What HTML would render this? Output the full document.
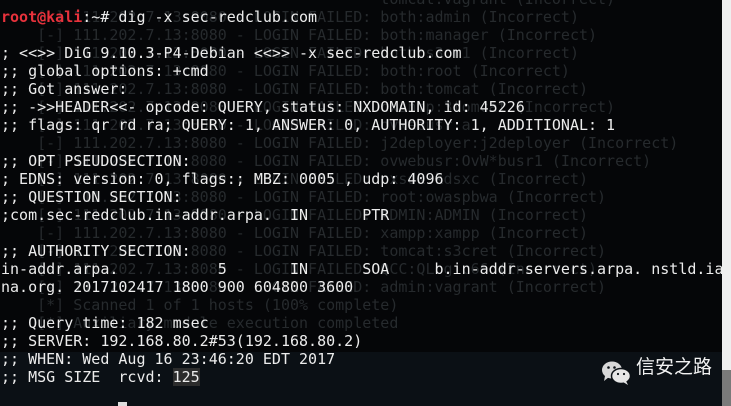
<!DOCTYPE html>
<html><head><meta charset="utf-8"><style>
html,body{margin:0;padding:0}
body{width:731px;height:406px;overflow:hidden;background:#050608;position:relative;font-family:"DejaVu Sans Mono","Liberation Mono",monospace}
pre{margin:0;position:absolute;left:1px;top:8px;font-family:"DejaVu Sans Mono","Liberation Mono",monospace;font-size:15px;line-height:18px;white-space:pre}
.bg{color:#262a2d;left:1px;top:-10px}
.fg{color:#ececec}
.r{color:#e8323c;font-weight:bold}
.band{position:absolute;left:0;top:352px;width:722px;height:54px;background:#0b1015}
.strip{position:absolute;left:722px;top:0;width:9px;height:370px;background:#efefef}
.strip2{position:absolute;left:722px;top:370px;width:9px;height:36px;background:#7a7a7a}
.hl{background:#2c2c2c}
.wx{position:absolute;left:636px;top:354px;color:#f2f2f2;font-family:"Noto Sans CJK SC",sans-serif;font-size:19px;line-height:24px}
</style></head><body>
<div class="band"></div>
<pre class="bg">                                          tomcat:vagrant (Incorrect)
    [-] 111.202.7.13:8080 - LOGIN FAILED: both:admin (Incorrect)
    [-] 111.202.7.13:8080 - LOGIN FAILED: both:manager (Incorrect)
    [-] 111.202.7.13:8080 - LOGIN FAILED: both:s3cr1 (Incorrect)
    [-] 111.202.7.13:8080 - LOGIN FAILED: both:root (Incorrect)
    [-] 111.202.7.13:8080 - LOGIN FAILED: both:tomcat (Incorrect)
    [-] 111.202.7.13:8080 - LOGIN FAILED: cxsnmp:3tomcat (Incorrect)
    [-] 111.202.7.13:8080 - LOGIN FAILED: ovwebusr:a
    [-] 111.202.7.13:8080 - LOGIN FAILED: j2deployer:j2deployer (Incorrect)
    [-] 111.202.7.13:8080 - LOGIN FAILED: ovwebusr:OvW*busr1 (Incorrect)
    [-] 111.202.7.13:8080 - LOGIN FAILED: cxsdk:kdsxc (Incorrect)
    [-] 111.202.7.13:8080 - LOGIN FAILED: root:owaspbwa (Incorrect)
    [-] 111.202.7.13:8080 - LOGIN FAILED: ADMIN:ADMIN (Incorrect)
    [-] 111.202.7.13:8080 - LOGIN FAILED: xampp:xampp (Incorrect)
    [-] 111.202.7.13:8080 - LOGIN FAILED: tomcat:s3cret (Incorrect)
    [-] 111.202.7.13:8080 - LOGIN FAILED: QCC:QLogic66 (Incorrect)
    [-] 111.202.7.13:8080 - LOGIN FAILED: admin:vagrant (Incorrect)
    [*] Scanned 1 of 1 hosts (100% complete)
    [*] Auxiliary module execution completed</pre>
<pre class="fg"><span class="r">root@kali</span>:~# dig -x sec-redclub.com

; &lt;&lt;&gt;&gt; DiG 9.10.3-P4-Debian &lt;&lt;&gt;&gt; -x sec-redclub.com
;; global options: +cmd
;; Got answer:
;; -&gt;&gt;HEADER&lt;&lt;- opcode: QUERY, status: NXDOMAIN, id: 45226
;; flags: qr rd ra; QUERY: 1, ANSWER: 0, AUTHORITY: 1, ADDITIONAL: 1

;; OPT PSEUDOSECTION:
; EDNS: version: 0, flags:; MBZ: 0005 , udp: 4096
;; QUESTION SECTION:
;com.sec-redclub.in-addr.arpa.	IN	PTR

;; AUTHORITY SECTION:
in-addr.arpa.		5	IN	SOA	b.in-addr-servers.arpa. nstld.ia
na.org. 2017102417 1800 900 604800 3600

;; Query time: 182 msec
;; SERVER: 192.168.80.2#53(192.168.80.2)
;; WHEN: Wed Aug 16 23:46:20 EDT 2017
;; MSG SIZE  rcvd: <span class="hl">125</span></pre>
<div style="position:absolute;left:118px;top:402px;width:9px;height:4px;background:#ddd"></div>
<svg style="position:absolute;left:601px;top:361px" width="31" height="24" viewBox="0 0 31 24">
<ellipse cx="11" cy="9" rx="10" ry="8.5" fill="#d8d8d8"/>
<path d="M4 15 L3 20 L8 16 Z" fill="#d8d8d8"/>
<ellipse cx="20" cy="15" rx="9.5" ry="7.5" fill="#e6e6e6" stroke="#0b1015" stroke-width="1.5"/>
<path d="M25 20 L27 24 L22 21 Z" fill="#e6e6e6"/>
<circle cx="7.5" cy="6.5" r="1.3" fill="#0b1015"/><circle cx="13.5" cy="6.5" r="1.3" fill="#0b1015"/>
<circle cx="17" cy="13" r="1.1" fill="#0b1015"/><circle cx="23" cy="13" r="1.1" fill="#0b1015"/>
</svg>
<div class="wx">信安之路</div>
<div class="strip"></div><div class="strip2"></div>
</body></html>
